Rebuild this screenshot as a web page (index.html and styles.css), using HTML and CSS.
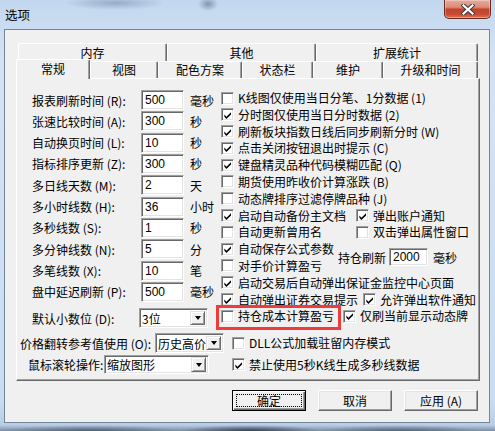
FILE: index.html
```html
<!DOCTYPE html>
<html lang="zh-CN">
<head>
  <meta charset="UTF-8">
  <title>选项</title>
  <link rel="stylesheet" href="styles.css">
</head>
<body>

<div class="window">
  <div class="titlebar">
    <span class="title">选项</span>
    <button class="close-btn">
      <svg width="14" height="11" viewBox="0 0 14 11">
        <path d="M2.5 1.5 L11.5 9.5 M11.5 1.5 L2.5 9.5" stroke="#3b3b3b" stroke-width="4.2" stroke-linecap="square"/>
        <path d="M2.5 1.5 L11.5 9.5 M11.5 1.5 L2.5 9.5" stroke="#fff" stroke-width="2.2" stroke-linecap="square"/>
      </svg>
    </button>
  </div>

  <div class="client">
    <div class="tabs">
      <div class="tab-row back">
        <div class="tab">内存</div>
        <div class="tab">其他</div>
        <div class="tab">扩展统计</div>
      </div>
      <div class="tab-row front">
        <div class="tab active">常规</div>
        <div class="tab">视图</div>
        <div class="tab">配色方案</div>
        <div class="tab">状态栏</div>
        <div class="tab">维护</div>
        <div class="tab">升级和时间</div>
      </div>

      <div class="panel">
        <div class="top">
          <div class="fields">
            <div class="field"><span class="lbl">报表刷新时间 (R):</span><span class="edit">500</span><span class="unit">毫秒</span></div>
            <div class="field"><span class="lbl">张速比较时间 (A):</span><span class="edit">300</span><span class="unit">秒</span></div>
            <div class="field"><span class="lbl">自动换页时间 (L):</span><span class="edit">10</span><span class="unit">秒</span></div>
            <div class="field"><span class="lbl">指标排序更新 (Z):</span><span class="edit">300</span><span class="unit">秒</span></div>
            <div class="field"><span class="lbl">多日线天数 (M):</span><span class="edit">2</span><span class="unit">天</span></div>
            <div class="field"><span class="lbl">多小时线数 (H):</span><span class="edit">36</span><span class="unit">小时</span></div>
            <div class="field"><span class="lbl">多秒线数 (S):</span><span class="edit">1</span><span class="unit">秒</span></div>
            <div class="field"><span class="lbl">多分钟线数 (N):</span><span class="edit">5</span><span class="unit">分</span></div>
            <div class="field"><span class="lbl">多笔线数 (X):</span><span class="edit">10</span><span class="unit">笔</span></div>
            <div class="field"><span class="lbl">盘中延迟刷新 (P):</span><span class="edit">500</span><span class="unit">毫秒</span></div>
            <div class="field decimals">
              <span class="lbl short">默认小数位 (D):</span>
              <span class="combo w69"><span class="combo-text">3位</span><span class="drop"><i></i></span></span>
            </div>
          </div>

          <div class="checks">
            <div class="chk-row"><label class="check"><span class="box"></span>K线图仅使用当日分笔、1分数据 (1)</label></div>
            <div class="chk-row"><label class="check"><span class="box"><svg width="11" height="11" viewBox="0 0 11 11"><path d="M1.5 4.5 L3.8 6.8 L8.8 1.8 L8.8 4.3 L3.8 9.3 L1.5 7 Z"/></svg></span>分时图仅使用当日分时数据 (2)</label></div>
            <div class="chk-row"><label class="check"><span class="box"><svg width="11" height="11" viewBox="0 0 11 11"><path d="M1.5 4.5 L3.8 6.8 L8.8 1.8 L8.8 4.3 L3.8 9.3 L1.5 7 Z"/></svg></span>刷新板块指数日线后同步刷新分时 (W)</label></div>
            <div class="chk-row"><label class="check"><span class="box"><svg width="11" height="11" viewBox="0 0 11 11"><path d="M1.5 4.5 L3.8 6.8 L8.8 1.8 L8.8 4.3 L3.8 9.3 L1.5 7 Z"/></svg></span>点击关闭按钮退出时提示 (C)</label></div>
            <div class="chk-row"><label class="check"><span class="box"><svg width="11" height="11" viewBox="0 0 11 11"><path d="M1.5 4.5 L3.8 6.8 L8.8 1.8 L8.8 4.3 L3.8 9.3 L1.5 7 Z"/></svg></span>键盘精灵品种代码模糊匹配 (Q)</label></div>
            <div class="chk-row"><label class="check"><span class="box"></span>期货使用昨收价计算涨跌 (B)</label></div>
            <div class="chk-row"><label class="check"><span class="box"></span>动态牌排序过滤停牌品种 (J)</label></div>
            <div class="chk-row">
              <label class="check c135"><span class="box"><svg width="11" height="11" viewBox="0 0 11 11"><path d="M1.5 4.5 L3.8 6.8 L8.8 1.8 L8.8 4.3 L3.8 9.3 L1.5 7 Z"/></svg></span>启动自动备份主文档</label>
              <label class="check"><span class="box"><svg width="11" height="11" viewBox="0 0 11 11"><path d="M1.5 4.5 L3.8 6.8 L8.8 1.8 L8.8 4.3 L3.8 9.3 L1.5 7 Z"/></svg></span>弹出账户通知</label>
            </div>
            <div class="chk-row">
              <label class="check c135"><span class="box"></span>自动更新曾用名</label>
              <label class="check"><span class="box"></span>双击弹出属性窗口</label>
            </div>
            <div class="chk-group">
              <div class="sub">
                <div class="chk-row"><label class="check"><span class="box"><svg width="11" height="11" viewBox="0 0 11 11"><path d="M1.5 4.5 L3.8 6.8 L8.8 1.8 L8.8 4.3 L3.8 9.3 L1.5 7 Z"/></svg></span>自动保存公式参数</label></div>
                <div class="chk-row"><label class="check"><span class="box"></span>对手价计算盈亏</label></div>
              </div>
              <div class="refresh">
                <span>持仓刷新</span>
                <span class="edit small">2000</span>
                <span class="unit">毫秒</span>
              </div>
            </div>
            <div class="chk-row"><label class="check"><span class="box"><svg width="11" height="11" viewBox="0 0 11 11"><path d="M1.5 4.5 L3.8 6.8 L8.8 1.8 L8.8 4.3 L3.8 9.3 L1.5 7 Z"/></svg></span>启动交易后自动弹出保证金监控中心页面</label></div>
            <div class="chk-row">
              <label class="check c142"><span class="box"><svg width="11" height="11" viewBox="0 0 11 11"><path d="M1.5 4.5 L3.8 6.8 L8.8 1.8 L8.8 4.3 L3.8 9.3 L1.5 7 Z"/></svg></span>自动弹出证券交易提示</label>
              <label class="check"><span class="box"><svg width="11" height="11" viewBox="0 0 11 11"><path d="M1.5 4.5 L3.8 6.8 L8.8 1.8 L8.8 4.3 L3.8 9.3 L1.5 7 Z"/></svg></span>允许弹出软件通知</label>
            </div>
            <div class="chk-row marked">
              <label class="check c122"><span class="box"></span>持仓成本计算盈亏</label>
              <label class="check"><span class="box"><svg width="11" height="11" viewBox="0 0 11 11"><path d="M1.5 4.5 L3.8 6.8 L8.8 1.8 L8.8 4.3 L3.8 9.3 L1.5 7 Z"/></svg></span>仅刷当前显示动态牌</label>
              <span class="highlight"></span>
            </div>
          </div>
        </div>

        <div class="bottom-row first">
          <div class="left">
            <span class="lbl-price">价格翻转参考值使用 (O):</span>
            <span class="combo w69"><span class="combo-text">历史高价</span><span class="drop"><i></i></span></span>
          </div>
          <label class="check"><span class="box"></span>DLL公式加载驻留内存模式</label>
        </div>
        <div class="bottom-row second">
          <div class="left">
            <span class="lbl-wheel">鼠标滚轮操作:</span>
            <span class="combo w105"><span class="combo-text">缩放图形</span><span class="drop"><i></i></span></span>
          </div>
          <label class="check"><span class="box"><svg width="11" height="11" viewBox="0 0 11 11"><path d="M1.5 4.5 L3.8 6.8 L8.8 1.8 L8.8 4.3 L3.8 9.3 L1.5 7 Z"/></svg></span>禁止使用5秒K线生成多秒线数据</label>
        </div>
      </div>
    </div>

    <div class="buttons">
      <button class="btn default"><span class="focus">确定</span></button>
      <button class="btn">取消</button>
      <button class="btn">应用 (A)</button>
    </div>
  </div>
</div>

</body>
</html>
```

FILE: styles.css
```css
* { box-sizing: border-box; }

body {
  margin: 0;
  font-family: "Noto Sans CJK SC", sans-serif;
  font-size: 12px;
  color: #000;
}

.window {
  width: 495px;
  height: 431px;
  display: flex;
  flex-direction: column;
  overflow: hidden;
  background:
    radial-gradient(ellipse 50px 7px at 115px 3px, rgba(70, 90, 120, .35), transparent),
    radial-gradient(ellipse 10px 7px at 208px 4px, rgba(50, 70, 100, .45), transparent),
    radial-gradient(ellipse 70px 6px at 250px 431px, rgba(20, 30, 45, .7), transparent),
    radial-gradient(ellipse 90px 6px at 90px 431px, rgba(40, 55, 75, .55), transparent),
    radial-gradient(ellipse 80px 6px at 400px 431px, rgba(40, 55, 75, .5), transparent),
    linear-gradient(#c2d7ef, #d3e3f4 60px, #c9dcf1 400px, #b9cee6 425px, #7d8ea5 431px);
}

/* title bar */
.titlebar {
  height: 29px;
  display: flex;
  justify-content: space-between;
  align-items: flex-start;
}

.title {
  font-size: 12.5px;
  line-height: 29px;
  padding-left: 5px;
}

.close-btn {
  width: 47px;
  height: 19px;
  margin-right: 4px;
  padding: 0;
  border: 1px solid #6e2b21;
  border-top: none;
  border-radius: 0 0 5px 5px;
  background: linear-gradient(#e7aa9c, #db8b78 40%, #c3432d 52%, #c94b33 80%, #dd7658);
  box-shadow: inset 0 0 0 1px rgba(255, 255, 255, .3);
  display: flex;
  align-items: center;
  justify-content: center;
}

/* client area */
.client {
  flex: 1;
  margin: 0 5px 8px 4px;
  border: 1px solid #75859a;
  background: #f0f0f0;
}

.tabs {
  padding: 13px 0 0 11px;
}

.tab-row {
  display: grid;
}

.tab-row.back {
  grid-template-columns: 149px 149px 162px;
  grid-template-rows: 18px;
  margin-left: 2px;
}

.tab-row.front {
  grid-template-columns: 74px 68px 84px 71px 70px 95px;
  grid-template-rows: 19px;
  align-items: end;
  margin-top: -2px;
}

.tab {
  height: 18px;
  background: #f0f0f0;
  border-top: 1px solid #fff;
  border-left: 1px solid #fff;
  border-right: 1px solid #696969;
  border-radius: 2px 2px 0 0;
  box-shadow: inset -1px 0 #a0a0a0;
  text-align: center;
  line-height: 17px;
}

.front .tab {
  height: 17px;
  line-height: 16px;
}

.front .tab.active {
  position: relative;
  height: 20px;
  margin-bottom: -1px;
  line-height: 17px;
}

.panel {
  width: 464px;
  height: 303px;
  border: 1px solid;
  border-color: #fff #696969 #696969 #fff;
  box-shadow: inset -1px -1px #a0a0a0;
  padding-top: 11px;
}

.top {
  display: flex;
  padding-left: 15px;
}

/* left column: numeric fields */
.fields {
  width: 189px;
  display: flex;
  flex-direction: column;
  gap: 1.33px;
}

.field {
  height: 20px;
  display: flex;
  align-items: center;
  white-space: nowrap;
}

.lbl {
  width: 109px;
}

.lbl.short {
  width: 107px;
}

.field.decimals {
  margin-top: 5px;
}

.edit {
  width: 43px;
  height: 20px;
  background: #fff;
  border: 1px solid;
  border-color: #a0a0a0 #fff #fff #a0a0a0;
  box-shadow: inset 1px 1px #696969, inset -1px -1px #e3e3e3;
  padding: 1px 0 0 3px;
  font-family: "Liberation Sans", sans-serif;
  font-size: 12px;
  line-height: 16px;
}

.edit.small {
  width: 39px;
  height: 18px;
  line-height: 14px;
  margin-left: 3px;
}

.unit {
  margin-left: 6px;
}

/* combo boxes */
.combo {
  height: 20px;
  display: flex;
  background: #fff;
  border: 1px solid;
  border-color: #a0a0a0 #fff #fff #a0a0a0;
  box-shadow: inset 1px 1px #696969, inset -1px -1px #e3e3e3;
  padding: 2px 2px 2px 1px;
}

.combo.w69 { width: 69px; }
.combo.w105 { width: 105px; }

.combo-text {
  flex: 1;
  line-height: 16px;
  padding-left: 1px;
  white-space: nowrap;
}

.drop {
  width: 15px;
  flex: none;
  background: #f0f0f0;
  border: 1px solid;
  border-color: #e3e3e3 #696969 #696969 #e3e3e3;
  box-shadow: inset 1px 1px #fff, inset -1px -1px #a0a0a0;
  display: flex;
  align-items: center;
  justify-content: center;
}

.drop i {
  width: 0;
  height: 0;
  border-left: 3.5px solid transparent;
  border-right: 3.5px solid transparent;
  border-top: 4px solid #000;
}

/* right column: checkboxes */
.checks {
  display: flex;
  flex-direction: column;
  margin-top: -0.4px;
}

.chk-row {
  height: 16.8px;
  display: flex;
  align-items: center;
  white-space: nowrap;
}

.check {
  display: inline-flex;
  align-items: center;
  white-space: nowrap;
  line-height: 16px;
}

.check.c135 { width: 135px; }
.check.c142 { width: 142px; }
.check.c122 { width: 122px; }

.box {
  width: 13px;
  height: 13px;
  flex: none;
  margin-right: 4px;
  background: #fff;
  border: 1px solid;
  border-color: #a0a0a0 #fff #fff #a0a0a0;
  box-shadow: inset 1px 1px #696969, inset -1px -1px #e3e3e3;
  display: flex;
  align-items: center;
  justify-content: center;
}

.box svg {
  display: block;
  margin: 1px 0 0 1px;
}

.chk-group {
  height: 33.6px;
  display: flex;
  align-items: center;
}

.sub {
  width: 117px;
}

.refresh {
  display: flex;
  align-items: center;
  margin-top: -1px;
}

.refresh .unit {
  margin-left: 5px;
}

.chk-row.marked {
  position: relative;
}

.highlight {
  position: absolute;
  left: -5px;
  top: -3px;
  width: 125px;
  height: 25px;
  border: 3px solid #ef3b3b;
}

/* bottom rows */
.bottom-row {
  display: flex;
  align-items: center;
  white-space: nowrap;
}

.bottom-row.first {
  height: 20px;
  margin-top: 5px;
}

.bottom-row.second {
  height: 19px;
  margin-top: 2px;
}

.bottom-row .left {
  width: 215px;
  display: flex;
  align-items: center;
}

.first .left { padding-left: 3px; }
.second .left { padding-left: 11px; }

.second .combo { height: 19px; padding-top: 1px; padding-bottom: 1px; }

.lbl-price { width: 135px; }
.lbl-wheel { width: 76px; }

/* dialog buttons */
.buttons {
  display: flex;
  justify-content: flex-end;
  gap: 12px;
  padding-right: 11px;
  margin-top: 9px;
}

.btn {
  width: 74px;
  height: 21px;
  padding: 0;
  font-family: "Noto Sans CJK SC", sans-serif;
  font-size: 12px;
  color: #000;
  background: #f0f0f0;
  border: 1px solid;
  border-color: #fff #696969 #696969 #fff;
  box-shadow: inset -1px -1px #a0a0a0, inset 1px 1px #e3e3e3;
  line-height: 17px;
}

.btn.default {
  border: 1px solid #000;
  box-shadow: inset 1px 1px #fff, inset -1px -1px #696969, inset -2px -2px #a0a0a0;
  padding: 3px;
}

.btn .focus {
  display: block;
  height: 13px;
  border: 1px dotted #000;
  line-height: 11px;
}
```
